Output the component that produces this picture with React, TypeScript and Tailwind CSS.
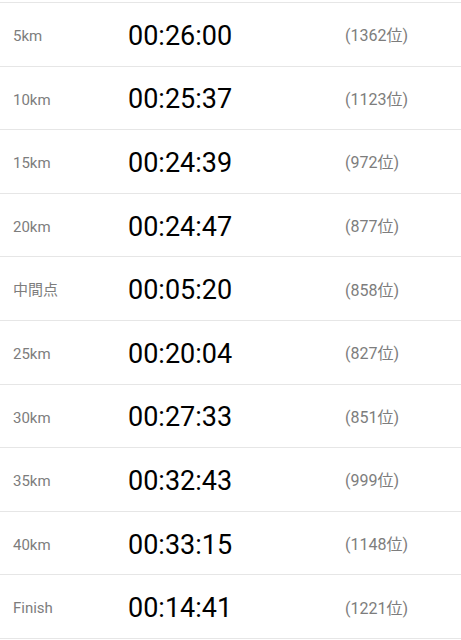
import React from "react";

const rows: [string, string, string][] = [
  ["5km", "00:26:00", "(1362位)"],
  ["10km", "00:25:37", "(1123位)"],
  ["15km", "00:24:39", "(972位)"],
  ["20km", "00:24:47", "(877位)"],
  ["中間点", "00:05:20", "(858位)"],
  ["25km", "00:20:04", "(827位)"],
  ["30km", "00:27:33", "(851位)"],
  ["35km", "00:32:43", "(999位)"],
  ["40km", "00:33:15", "(1148位)"],
  ["Finish", "00:14:41", "(1221位)"],
];

export default function App() {
  return (
    <div
      className="w-[461px] h-[640px] overflow-hidden bg-white pt-[2px]"
      style={{ fontFamily: 'Roboto, "Noto Sans CJK JP", sans-serif' }}
    >
      <div className="border-t border-[#e6e6e6]">
        {rows.map(([label, time, rank]) => (
          <div
            key={label}
            className="flex items-center h-[63.6px] border-b border-[#e6e6e6] pl-[13px] pt-[4px]"
          >
            <div className="w-[115px] text-[15px] text-[#7d7d7d]">{label}</div>
            <div className="w-[217px] text-[27px] text-black leading-none">{time}</div>
            <div className="text-[16px] text-[#7d7d7d]">{rank}</div>
          </div>
        ))}
      </div>
    </div>
  );
}
